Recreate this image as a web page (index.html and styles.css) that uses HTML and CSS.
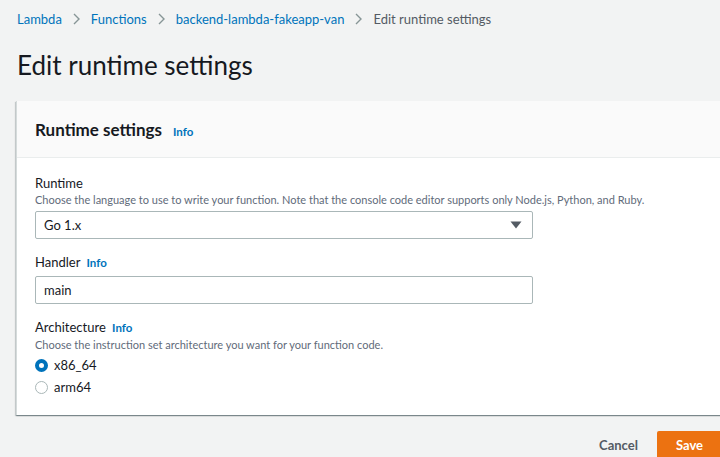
FILE: index.html
```html
<!DOCTYPE html>
<html>
<head>
<meta charset="utf-8">
<link rel="stylesheet" href="styles.css">
</head>
<body>
<div class="page">
  <nav class="crumbs">
    <a class="crumb">Lambda</a>
    <svg class="chev" width="9" height="12" viewBox="0 0 9 12"><path d="M2 1 L7 6 L2 11" fill="none" stroke="#879596" stroke-width="1.4"/></svg>
    <a class="crumb">Functions</a>
    <svg class="chev" width="9" height="12" viewBox="0 0 9 12"><path d="M2 1 L7 6 L2 11" fill="none" stroke="#879596" stroke-width="1.4"/></svg>
    <a class="crumb">backend-lambda-fakeapp-van</a>
    <svg class="chev" width="9" height="12" viewBox="0 0 9 12"><path d="M2 1 L7 6 L2 11" fill="none" stroke="#879596" stroke-width="1.4"/></svg>
    <span class="crumb current">Edit runtime settings</span>
  </nav>
  <h1 class="title">Edit runtime settings</h1>
  <section class="card">
    <header class="card-head">
      <h2>Runtime settings</h2>
      <a class="info">Info</a>
    </header>
    <div class="card-body">
      <div class="field">
        <div class="label">Runtime</div>
        <div class="desc">Choose the language to use to write your function. Note that the console code editor supports only Node.js, Python, and Ruby.</div>
        <div class="select">
          <span>Go 1.x</span>
          <svg width="12" height="8" viewBox="0 0 12 8"><path d="M0.5 0.5 H11.5 L6 7.5 Z" fill="#545b64"/></svg>
        </div>
      </div>
      <div class="field">
        <div class="label">Handler <a class="info">Info</a></div>
        <div class="input">main</div>
      </div>
      <div class="field">
        <div class="label">Architecture <a class="info">Info</a></div>
        <div class="desc">Choose the instruction set architecture you want for your function code.</div>
        <div class="radios">
          <div class="radio"><span class="dot on"></span>x86_64</div>
          <div class="radio"><span class="dot"></span>arm64</div>
        </div>
      </div>
    </div>
  </section>
  <div class="actions">
    <a class="cancel">Cancel</a>
    <a class="save">Save</a>
  </div>
</div>
</body>
</html>
```
FILE: styles.css
```css
html, body {
  margin: 0;
  padding: 0;
  background: #f2f3f3;
  overflow: hidden;
  width: 720px;
  height: 457px;
}
body {
  font-family: Lato, "Liberation Sans", sans-serif;
  color: #16191f;
}
.page {
  width: 704px;
  padding-left: 16px;
}
.crumbs {
  display: flex;
  align-items: center;
  gap: 10px;
  height: 38px;
  font-size: 13px;
  padding-left: 1px;
}
.crumb {
  color: #0073bb;
}
.crumb.current {
  color: #545b64;
}
.title {
  margin: 0;
  font-weight: 400;
  font-size: 26px;
  line-height: 54px;
  height: 63px;
  padding-left: 1px;
}
.card {
  width: 740px;
  background: #fff;
  border-left: 1px solid #d5dbdb;
  box-shadow: 0 1px 1px 0 rgba(0,28,36,0.3), 1px 1px 1px 0 rgba(0,28,36,0.15), -1px 1px 1px 0 rgba(0,28,36,0.15);
}
.card-head {
  display: flex;
  align-items: baseline;
  gap: 8px;
  height: 57px;
  box-sizing: border-box;
  padding: 16px 18px 0;
  background: #fafafa;
  border-bottom: 1px solid #eaeded;
}
.card-head h2 {
  margin: 0;
  font-size: 17px;
  font-weight: 700;
  line-height: 26px;
}
.info {
  color: #0073bb;
  font-size: 11.5px;
  font-weight: 700;
  margin-left: 3px;
}
.card-body {
  padding: 16px 18px 19px;
}
.field {
  margin-bottom: 14px;
}
.field:last-child {
  margin-bottom: 0;
}
.label {
  font-size: 13px;
  line-height: 18px;
}
.desc {
  font-size: 11px;
  color: #5f6b7a;
  line-height: 15px;
}
.select, .input {
  margin-top: 4px;
  width: 498px;
  height: 28px;
  box-sizing: border-box;
  border: 1px solid #aab7b8;
  border-radius: 2px;
  display: flex;
  align-items: center;
  justify-content: space-between;
  padding: 0 8px;
  font-size: 13px;
  background: #fff;
}
.select svg {
  margin-right: 2px;
}
.radios {
  margin-top: 5px;
  display: flex;
  flex-direction: column;
  gap: 5px;
}
.radio {
  display: flex;
  align-items: center;
  gap: 6px;
  font-size: 13px;
  line-height: 17px;
}
.dot {
  width: 13px;
  height: 13px;
  border-radius: 50%;
  border: 1px solid #aab7b8;
  box-sizing: border-box;
}
.dot.on {
  border: 4px solid #0073bb;
}
.actions {
  display: flex;
  justify-content: flex-end;
  align-items: flex-start;
  gap: 19px;
  padding-top: 16px;
}
.cancel {
  font-size: 13px;
  font-weight: 700;
  color: #545b64;
  line-height: 28px;
}
.save {
  background: #ec7211;
  color: #fff;
  font-size: 13px;
  font-weight: 700;
  padding: 0 17px 0 19px;
  height: 30px;
  line-height: 28px;
  border-radius: 2px 0 0 0;
}
```
